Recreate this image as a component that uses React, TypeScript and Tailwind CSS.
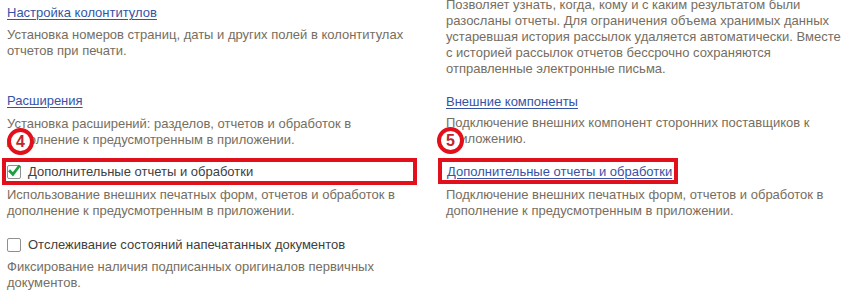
import React from 'react'

const link = 'text-[#3553a6] underline underline-offset-[2px] decoration-[1px]'
const desc = 'text-[#766e61]'

function Box({ checked }: { checked?: boolean }) {
    return (
        <span className="relative inline-block h-[14px] w-[14px] shrink-0 rounded-[2px] border border-[#8f8f8f] bg-white">
            {checked && (
                <svg className="absolute left-[-1px] top-[-2px]" width="14" height="14" viewBox="0 0 14 14">
                    <path d="M3 7.2 L5.9 10.3 L11.8 2.6" fill="none" stroke="#1f9e44" strokeWidth="2.8" strokeLinecap="square" />
                </svg>
            )}
        </span>
    )
}

function Badge({ n, className }: { n: string; className: string }) {
    return (
        <div className={`absolute flex h-[27px] w-[27px] items-center justify-center rounded-full border-[4px] border-[#e2101b] bg-white text-[16px] font-bold leading-none text-[#c2242b] ${className}`}>
            {n}
        </div>
    )
}

export default function App() {
    return (
        <div className="relative h-[303px] w-[860px] overflow-hidden bg-white font-['Liberation_Sans',Arial,sans-serif] text-[13px] leading-[16px]">
            <div className="flex">
                {/* left column */}
                <div className="w-[446px] shrink-0 pl-[7px] pt-[5px]">
                    <div><a className={link}>Настройка колонтитулов</a></div>
                    <div className={`mt-[6px] ${desc}`}>
                        Установка номеров страниц, даты и других полей в колонтитулах
                        <br />
                        отчетов при печати.
                    </div>

                    <div className="mt-[34px]"><a className={link}>Расширения</a></div>
                    <div className={`mt-[7px] ${desc}`}>
                        Установка расширений: разделов, отчетов и обработок в
                        <br />
                        дополнение к предусмотренным в приложении.
                    </div>

                    <div className="ml-[-5px] mt-[10px] flex w-[415px] items-center gap-[7px] border-[4px] border-[#e2101b] pb-[1px] pl-[1px] pt-[2px] text-[#404040]">
                        <Box checked />
                        <span>Дополнительные отчеты и обработки</span>
                    </div>
                    <div className={`mt-[2px] ${desc}`}>
                        Использование внешних печатных форм, отчетов и обработок в
                        <br />
                        дополнение к предусмотренным в приложении.
                    </div>

                    <div className="mt-[18px] flex items-center gap-[7px] text-[#404040]">
                        <Box />
                        <span>Отслеживание состояний напечатанных документов</span>
                    </div>
                    <div className={`mt-[6px] ${desc}`}>
                        Фиксирование наличия подписанных оригиналов первичных
                        <br />
                        документов.
                    </div>
                </div>

                {/* right column */}
                <div className="w-[414px] shrink-0">
                    <div className={`mt-[-3px] ${desc}`}>
                        Позволяет узнать, когда, кому и с каким результатом были
                        <br />
                        разосланы отчеты. Для ограничения объема хранимых данных
                        <br />
                        устаревшая история рассылок удаляется автоматически. Вместе
                        <br />
                        с историей рассылок отчетов бессрочно сохраняются
                        <br />
                        отправленные электронные письма.
                    </div>

                    <div className="mt-[17px]"><a className={link}>Внешние компоненты</a></div>
                    <div className={`mt-[5px] ${desc}`}>
                        Подключение внешних компонент сторонних поставщиков к
                        <br />
                        приложению.
                    </div>

                    <div className="ml-[-8px] mt-[11px] w-[240px] border-[4px] border-[#e2101b] pl-[5px] pt-[2px]">
                        <a className={link}>Дополнительные отчеты и обработки</a>
                    </div>
                    <div className={`mt-[3px] ${desc}`}>
                        Подключение внешних печатных форм, отчетов и обработок в
                        <br />
                        дополнение к предусмотренным в приложении.
                    </div>
                </div>
            </div>

            <Badge n="4" className="left-[7px] top-[128px]" />
            <Badge n="5" className="left-[437px] top-[127px]" />
        </div>
    )
}
